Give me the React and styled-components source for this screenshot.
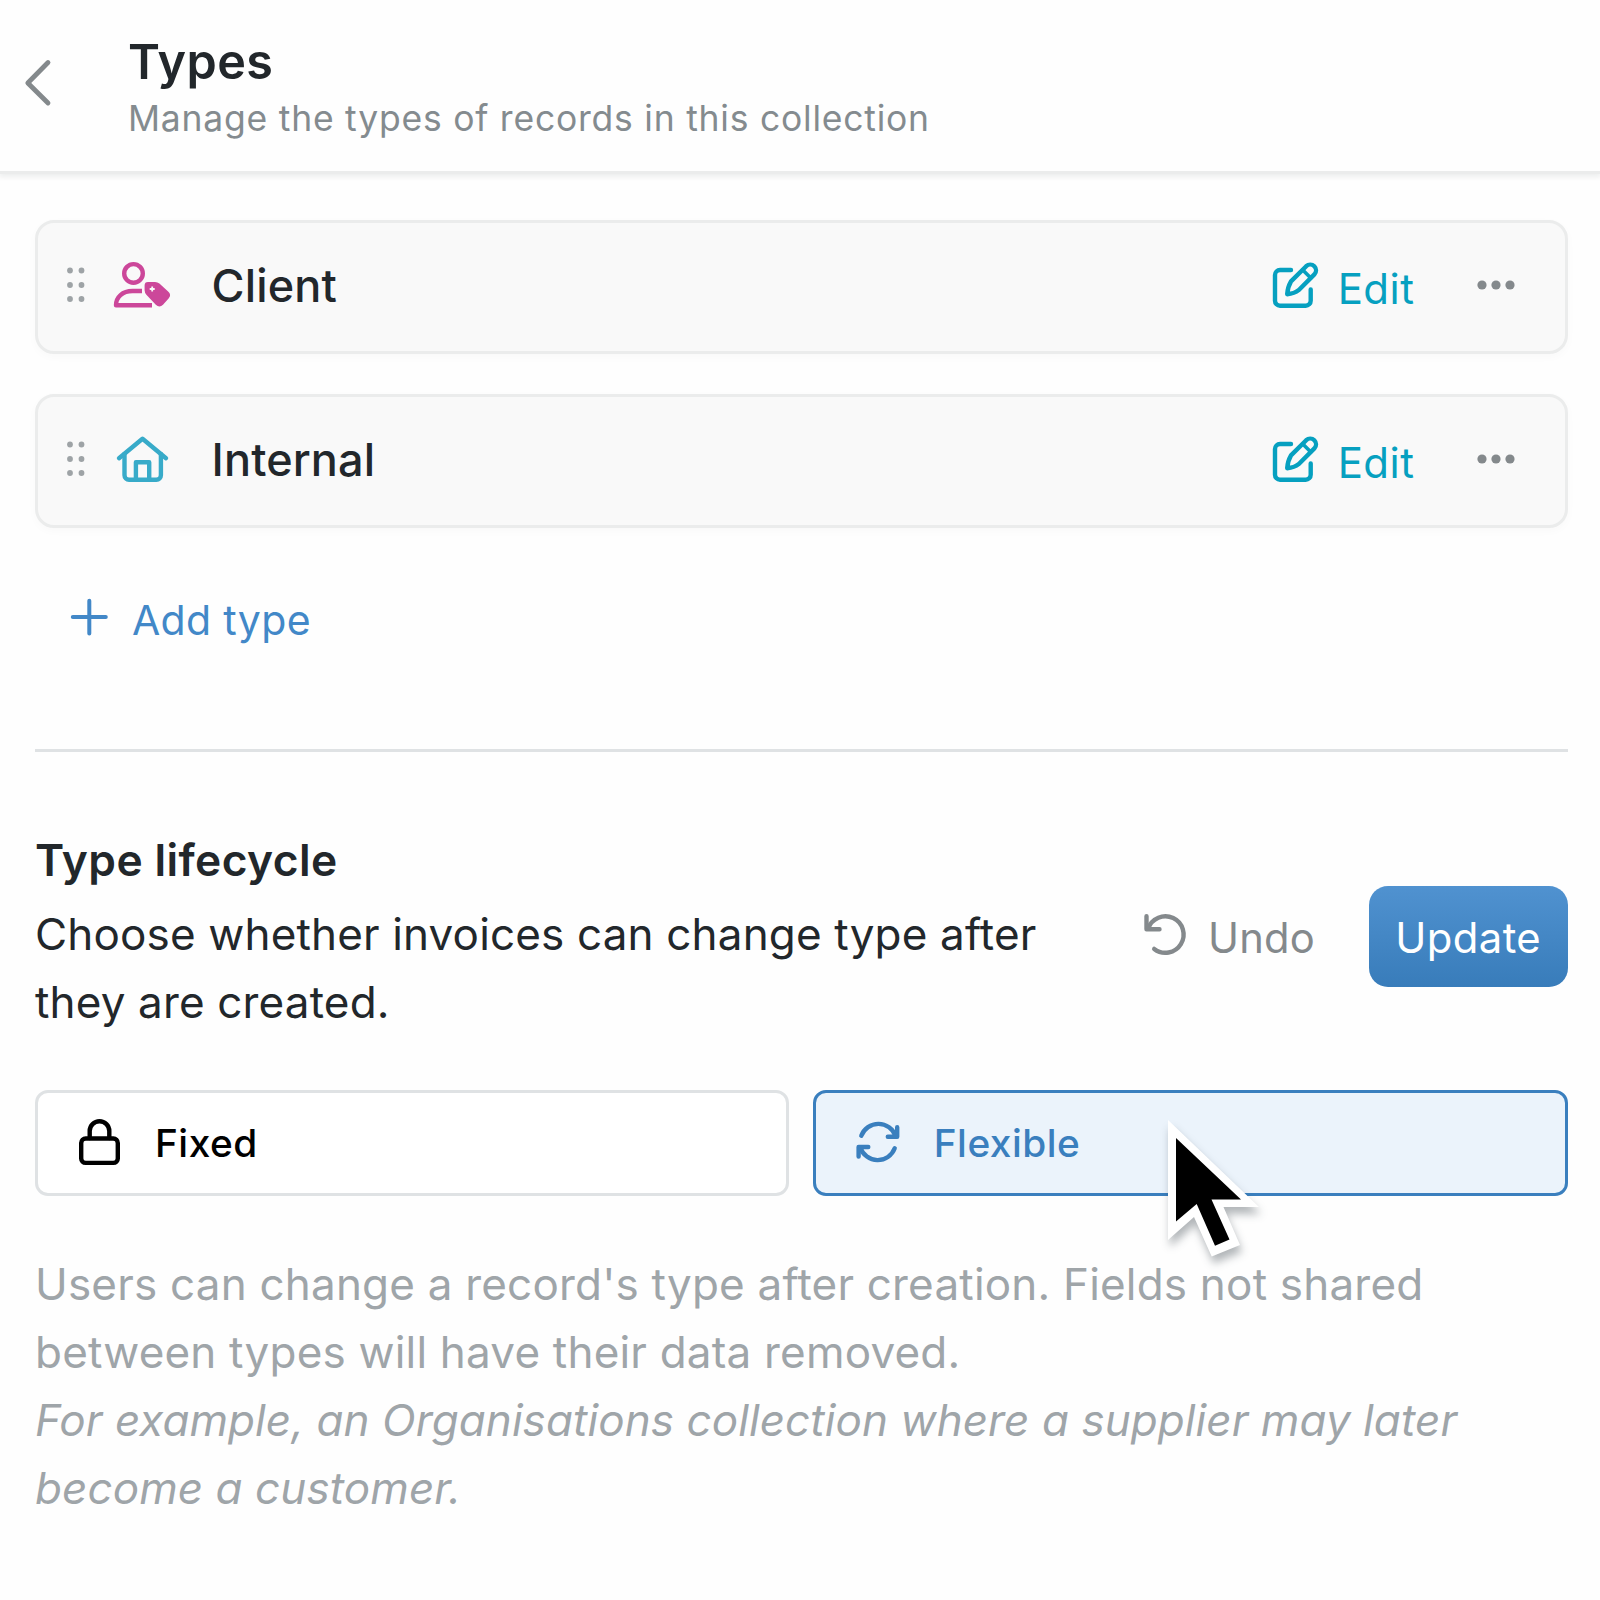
import React from 'react';
import styled, { createGlobalStyle } from 'styled-components';

const GlobalStyle = createGlobalStyle`
    * {
        box-sizing: border-box;
    }
    body {
        margin: 0;
        background: #fefefe;
        font-family: Inter, sans-serif;
        color: #22272b;
    }
    button {
        font-family: inherit;
        background: none;
        border: none;
        padding: 0;
        margin: 0;
    }
    svg {
        display: block;
        flex-shrink: 0;
        overflow: visible;
    }
    `;

const Panel = styled.div`
    width: 1600px;
    height: 1600px;
    overflow: hidden;
    background: #fefefe;
    `;

const Header = styled.header`
    height: 171px;
    display: flex;
    padding: 34px 0 0 24px;
    background: #fefefe;
    box-shadow: 0 3px 0 #ebecec, 0 5px 5px 1px rgba(20, 25, 30, 0.07);
    `;

const BackButton = styled.button`
    width: 28px;
    height: 48px;
    margin-top: 25px;
    color: #84898c;
    `;

const HeaderText = styled.div`
    margin-left: 76px;
    `;

const Title = styled.h1`
    margin: 0;
    font-size: 48.5px;
    line-height: 56px;
    font-weight: 600;
    letter-spacing: 0.45px;
    `;

const Subtitle = styled.p`
    margin: 7px 0 0;
    font-size: 35.5px;
    line-height: 44px;
    letter-spacing: 0.77px;
    color: #848b8f;
    white-space: nowrap;
    `;

const Content = styled.main`
    padding: 49px 32px 0 35px;
    `;

const TypeList = styled.div`
    display: flex;
    flex-direction: column;
    gap: 40px;
    `;

const TypeCard = styled.div`
    height: 134px;
    display: flex;
    align-items: center;
    padding: 0 50px 0 29px;
    border: 3px solid #ebecec;
    border-radius: 19px;
    background: #f9f9f9;
    box-shadow: 0 3px 10px rgba(20, 25, 30, 0.025);
    `;

const DragHandle = styled.span`
    margin: 0 27px 5px 0;
    color: #9ea3a6;
    `;

const TypeIcon = styled.span`
    width: 60px;
    margin-bottom: 5px;
    color: ${props => props.color};
    `;

const TypeName = styled.span`
    flex: 1;
    margin: 0 0 2px 39.5px;
    font-size: 45px;
    line-height: 54px;
    font-weight: 500;
    letter-spacing: 0.15px;
    `;

const EditButton = styled.button`
    display: flex;
    align-items: center;
    gap: 17.5px;
    margin-right: 62.5px;
    color: #06a0c0;
    font-size: 42px;
    line-height: 50px;
    letter-spacing: 0.5px;

    svg {
        margin-bottom: 3px;
    }
    span {
        margin-top: 3px;
    }
    `;

const MoreButton = styled.button`
    margin-bottom: 5px;
    color: #84898c;
    `;

const AddButton = styled.button`
    display: flex;
    align-items: center;
    gap: 24px;
    margin: 67px 0 0 35px;
    color: #4288c8;
    font-size: 41px;
    line-height: 50px;
    letter-spacing: 0.32px;

    svg {
        margin-bottom: 7px;
    }
    `;

const Divider = styled.hr`
    height: 3px;
    margin: 104px 0 82px;
    border: none;
    background: #dfe2e4;
    `;

const SectionTitle = styled.h2`
    margin: 0;
    font-size: 44.3px;
    line-height: 53px;
    font-weight: 600;
    letter-spacing: 0.4px;
    `;

const IntroRow = styled.div`
    display: flex;
    align-items: flex-start;
    margin-top: -1px;
    `;

const Intro = styled.p`
    width: 1010px;
    margin: 14px auto 0 0;
    font-size: 44px;
    line-height: 68px;
    letter-spacing: 0.16px;
    `;

const UndoButton = styled.button`
    display: flex;
    align-items: center;
    gap: 21.5px;
    height: 101px;
    margin-right: 53.5px;
    color: #84898c;
    font-size: 41.7px;
    line-height: 50px;
    letter-spacing: 0.2px;

    svg {
        margin-bottom: 4px;
    }
    span {
        margin-top: 3px;
    }
    `;

const UpdateButton = styled.button`
    width: 199.5px;
    height: 101px;
    padding-top: 2px;
    border-radius: 19px;
    background: linear-gradient(180deg, #5092d0 0%, #387cba 100%);
    color: #fff;
    font-size: 41.8px;
    line-height: 50px;
    letter-spacing: 0.4px;
    `;

const Options = styled.div`
    display: grid;
    grid-template-columns: 1fr 1fr;
    gap: 24px;
    margin-top: 54px;
    margin-left: -0.5px;
    `;

const Option = styled.div`
    position: relative;
    height: 106px;
    display: flex;
    align-items: center;
    gap: ${props => (props.$selected ? '32px' : '33.5px')};
    padding: 0 0 2px ${props => (props.$selected ? '38.5px' : '40px')};
    border: 3px solid ${props => (props.$selected ? '#3a7fbe' : '#dfe2e4')};
    border-radius: 13px;
    background: ${props => (props.$selected ? '#ebf3fb' : '#fff')};
    color: ${props => (props.$selected ? '#3a7fbe' : '#000')};
    font-size: 38.8px;
    line-height: 48px;
    font-weight: 500;
    letter-spacing: 0.5px;

    span {
        margin-top: 1px;
    }
    `;

const Pointer = styled.svg`
    position: absolute;
    left: 339px;
    top: 17px;
    z-index: 2;
    filter: drop-shadow(2px 7px 4px rgba(20, 30, 40, 0.32));
    `;

const Description = styled.p`
    margin: 54px 0 0;
    font-size: 44px;
    line-height: 68px;
    letter-spacing: 0.2px;
    color: #9fa5a9;
    white-space: nowrap;

    em {
        letter-spacing: 0.07px;
    }
    `;

// shared props for the outlined icons
const line = {
    fill: 'none',
    stroke: 'currentColor',
    strokeWidth: 4.4,
    strokeLinecap: 'round',
    strokeLinejoin: 'round',
};

const ChevronIcon = () => (
    <svg width="28" height="48" {...line} strokeWidth="4.8">
        <path d="M24 3.5 3.8 24 24 44" />
    </svg>
)

const DragIcon = () => (
    <svg width="18" height="36" fill="currentColor">
        {[3.5, 18, 32].map(y => (
            <g key={y}>
                <circle cx="3" cy={y} r="2.9" />
                <circle cx="14.5" cy={y} r="2.9" />
            </g>
        ))}
    </svg>
)

const UserTagIcon = () => (
    <svg width="60" height="50" {...line} strokeLinecap="butt">
        <circle cx="21.5" cy="13.4" r="9.3" />
        <path d="M30 31H20.5C10.5 31 4 37 4 45.3H40" />
        <path
            fill="currentColor"
            stroke="none"
            d="M36 22h7q2.6 0 4.4 1.6L56.4 31.8q3.2 3.2 .4 6.4L51 44.8q-3.6 3.4-7.2 0L34.6 34.9Q32.6 33 32.6 30.3V25.4q0-3.4 3.4-3.4z"
        />
        <path stroke="#f9f9f9" strokeWidth="1.8" d="M40.2 26.5v5M37.7 29h5" />
    </svg>
)

const HomeIcon = () => (
    <svg width="60" height="50" {...line}>
        <path d="M7 24.2 30.5 4.8 54 24.2" />
        <path d="M12.5 20V41.2a4.5 4.5 0 0 0 4.5 4.5H44.4a4.5 4.5 0 0 0 4.5-4.5V20" />
        <path d="M23.9 45V28.2H37.2V45" />
    </svg>
)

const EditIcon = () => (
    <svg width="48" height="48" {...line}>
        <path d="M19 8H8a5 5 0 0 0-5 5V38.7a5 5 0 0 0 5 5H33.7a5 5 0 0 0 5-5V27.5" />
        <path d="M34.2 4.2a5.8 5.8 0 0 1 8.2 8.2L26.6 28.2Q22.5 31.7 15.2 32.2 15.5 25.5 19 19.4z" />
        <path strokeWidth="3.6" d="M30.8 8l8 8" />
    </svg>
)

const MoreIcon = () => (
    <svg width="38" height="10" fill="currentColor">
        <circle cx="5" cy="5" r="4.6" />
        <circle cx="19" cy="5" r="4.6" />
        <circle cx="33" cy="5" r="4.6" />
    </svg>
)

const PlusIcon = () => (
    <svg width="38" height="38" {...line} strokeWidth="4">
        <path d="M19.3 2.8v32.7M2.8 19h33" />
    </svg>
)

const UndoIcon = () => (
    <svg width="44" height="44" {...line}>
        <path d="M11.2 35.9A18.2 18.2 0 1 0 5.2 15.6" />
        <path d="M3.5 3.3V16.3H16.5" />
    </svg>
)

const LockIcon = () => (
    <svg width="44" height="48" {...line}>
        <rect x="3.2" y="20.5" width="36.6" height="24.4" rx="4.5" />
        <path d="M11.7 20V13a9.8 9.8 0 0 1 19.6 0v7" />
    </svg>
)

const RefreshIcon = () => (
    <svg width="47" height="46" {...line}>
        <path d="M6.3 16.8A18.2 18.2 0 0 1 40.6 17.1" />
        <path d="M42.2 8.3V17.8H32.8" />
        <path d="M39.7 29.3A18.2 18.2 0 0 1 5.4 28.7" />
        <path d="M3.6 37.6V28H13.3" />
    </svg>
)

const types = [
    { name: 'Client', color: '#cc479a', icon: <UserTagIcon /> },
    { name: 'Internal', color: '#38abc9', icon: <HomeIcon /> },
];

export default function App() {
    return (
        <Panel>
            <GlobalStyle />
            <Header>
                <BackButton aria-label="Back"><ChevronIcon /></BackButton>
                <HeaderText>
                    <Title>Types</Title>
                    <Subtitle>Manage the types of records in this collection</Subtitle>
                </HeaderText>
            </Header>
            <Content>
                <TypeList>
                    {types.map(type => (
                        <TypeCard key={type.name}>
                            <DragHandle><DragIcon /></DragHandle>
                            <TypeIcon color={type.color}>{type.icon}</TypeIcon>
                            <TypeName>{type.name}</TypeName>
                            <EditButton><EditIcon /><span>Edit</span></EditButton>
                            <MoreButton aria-label="More"><MoreIcon /></MoreButton>
                        </TypeCard>
                    ))}
                </TypeList>
                <AddButton><PlusIcon />Add type</AddButton>
                <Divider />
                <SectionTitle>Type lifecycle</SectionTitle>
                <IntroRow>
                    <Intro>Choose whether invoices can change type after they are created.</Intro>
                    <UndoButton><UndoIcon /><span>Undo</span></UndoButton>
                    <UpdateButton>Update</UpdateButton>
                </IntroRow>
                <Options>
                    <Option><LockIcon /><span>Fixed</span></Option>
                    <Option $selected>
                        <RefreshIcon /><span>Flexible</span>
                        <Pointer width="120" height="160">
                            <path fill="#fff" d="M13 10V130L39 107 56.7 146.5 85 135 68.5 97H104z" />
                            <path fill="#000" d="M21 28V111.5L41.7 94 60 135.7 74.5 129.5 56.5 89.5H86z" />
                        </Pointer>
                    </Option>
                </Options>
                <Description>
                    Users can change a record's type after creation. Fields not shared<br />
                    between types will have their data removed.<br />
                    <em>
                        For example, an Organisations collection where a supplier may later<br />
                        become a customer.
                    </em>
                </Description>
            </Content>
        </Panel>
    )
}
